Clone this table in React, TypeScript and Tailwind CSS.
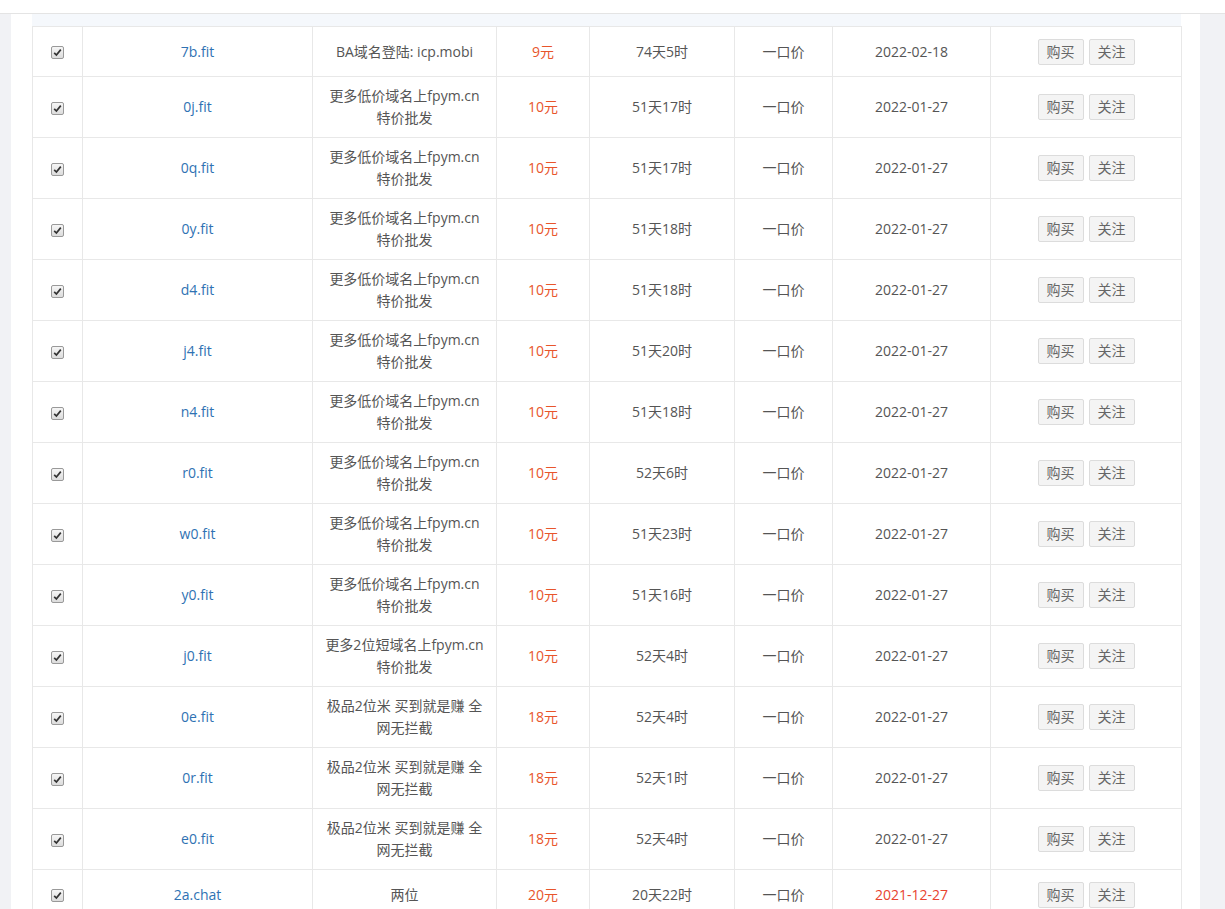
type Row = {
  domain: string;
  desc: string[];
  price: string;
  left: string;
  date: string;
  expired?: boolean;
};

const CHEAP = ["更多低价域名上fpym.cn", "特价批发"];
const TOP2 = ["极品2位米 买到就是赚 全", "网无拦截"];

const ROWS: Row[] = [
  { domain: "7b.fit", desc: ["BA域名登陆: icp.mobi"], price: "9元", left: "74天5时", date: "2022-02-18" },
  { domain: "0j.fit", desc: CHEAP, price: "10元", left: "51天17时", date: "2022-01-27" },
  { domain: "0q.fit", desc: CHEAP, price: "10元", left: "51天17时", date: "2022-01-27" },
  { domain: "0y.fit", desc: CHEAP, price: "10元", left: "51天18时", date: "2022-01-27" },
  { domain: "d4.fit", desc: CHEAP, price: "10元", left: "51天18时", date: "2022-01-27" },
  { domain: "j4.fit", desc: CHEAP, price: "10元", left: "51天20时", date: "2022-01-27" },
  { domain: "n4.fit", desc: CHEAP, price: "10元", left: "51天18时", date: "2022-01-27" },
  { domain: "r0.fit", desc: CHEAP, price: "10元", left: "52天6时", date: "2022-01-27" },
  { domain: "w0.fit", desc: CHEAP, price: "10元", left: "51天23时", date: "2022-01-27" },
  { domain: "y0.fit", desc: CHEAP, price: "10元", left: "51天16时", date: "2022-01-27" },
  { domain: "j0.fit", desc: ["更多2位短域名上fpym.cn", "特价批发"], price: "10元", left: "52天4时", date: "2022-01-27" },
  { domain: "0e.fit", desc: TOP2, price: "18元", left: "52天4时", date: "2022-01-27" },
  { domain: "0r.fit", desc: TOP2, price: "18元", left: "52天1时", date: "2022-01-27" },
  { domain: "e0.fit", desc: TOP2, price: "18元", left: "52天4时", date: "2022-01-27" },
  { domain: "2a.chat", desc: ["两位"], price: "20元", left: "20天22时", date: "2021-12-27", expired: true },
];

function CheckBox() {
  return (
    <span className="inline-flex h-[13px] w-[13px] items-center justify-center rounded-[2px] border border-[#999] bg-gradient-to-b from-[#f6f6f6] to-[#dcdcdc] align-middle">
      <svg width="9" height="9" viewBox="0 0 9 9">
        <path d="M1.2 4.8 L3.4 7 L7.8 1.6" fill="none" stroke="#333" strokeWidth="1.7" />
      </svg>
    </span>
  );
}

function Btn({ label }: { label: string }) {
  return (
    <button className="h-[26px] rounded-[2px] border border-[#dcdcdc] bg-[#f4f4f4] px-[8px] text-[14px] leading-[24px] text-[#666]">
      {label}
    </button>
  );
}

const td = "border border-[#e8e8e8] px-2 py-2 text-center align-middle leading-[22px]";

export default function App() {
  return (
    <div className="min-h-screen bg-[#f1f2f5] font-['Open_Sans','Noto_Sans_CJK_SC',sans-serif] text-[14px] text-[#555]">
      <div className="h-[14px] border-b border-[#e4e4e4] bg-white" />
      <div className="ml-[11px] mr-[25px] bg-white pl-[21px] pr-[19px]">
        <div className="h-[12px] bg-[#f5f8fc]" />
        <table className="w-full table-fixed border-collapse">
          <colgroup>
            <col className="w-[50px]" />
            <col className="w-[230px]" />
            <col className="w-[184px]" />
            <col className="w-[93px]" />
            <col className="w-[145px]" />
            <col className="w-[98px]" />
            <col className="w-[158px]" />
            <col className="w-[191px]" />
          </colgroup>
          <tbody>
            {ROWS.map((r) => (
              <tr key={r.domain} className="h-[50px]">
                <td className={td}>
                  <CheckBox />
                </td>
                <td className={td}>
                  <a className="text-[#2f72b3]">{r.domain}</a>
                </td>
                <td className={td}>
                  {r.desc.map((line) => (
                    <div key={line} className="whitespace-nowrap">
                      {line}
                    </div>
                  ))}
                </td>
                <td className={`${td} text-[#e8552b]`}>{r.price}</td>
                <td className={td}>{r.left}</td>
                <td className={td}>一口价</td>
                <td className={`${td} ${r.expired ? "text-[#e8432f]" : ""}`}>{r.date}</td>
                <td className={td}>
                  <div className="flex items-center justify-center gap-[5px]">
                    <Btn label="购买" />
                    <Btn label="关注" />
                  </div>
                </td>
              </tr>
            ))}
          </tbody>
        </table>
      </div>
    </div>
  );
}
